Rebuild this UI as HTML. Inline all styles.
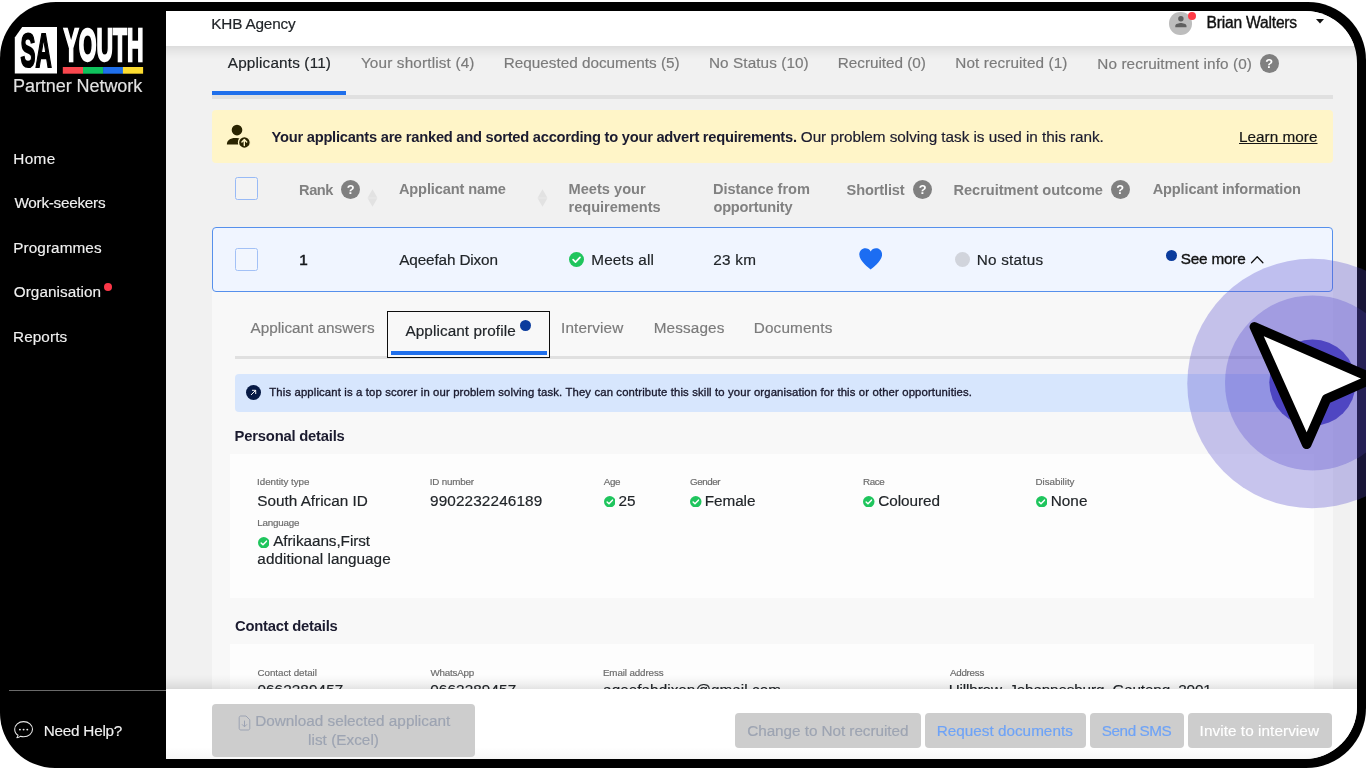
<!DOCTYPE html>
<html lang="en">
<head>
<meta charset="utf-8">
<title>SA Youth Partner Network - Applicants</title>
<style>
*{box-sizing:border-box;margin:0;padding:0}
html,body{width:1366px;height:768px;overflow:hidden;background:#fff}
body{position:relative;font-family:"Liberation Sans",Arial,sans-serif;font-size:15.3px;color:#212529}
.abs{position:absolute}
.t{position:absolute;white-space:nowrap;line-height:20px;display:block;-webkit-text-stroke:0.18px currentColor}
#side .t{-webkit-text-stroke:0.15px currentColor}
#frame{position:absolute;left:0;top:2px;width:1366px;height:765.5px;background:#000;border-radius:56px 58px 60px 55px}
#screen{position:absolute;left:166px;top:11px;width:1190.5px;height:747.5px;overflow:hidden;background:#f1f1f1;border-radius:0 51.5px 52.5px 0}
#page{position:absolute;left:-166px;top:-11px;width:1366px;height:768px;will-change:transform}
#side{position:absolute;left:0;top:0;width:166px;height:768px;will-change:transform}
.r{position:absolute}
.help{position:absolute;width:19.2px;height:19.2px;border-radius:50%;background:#808080;color:#fff;font-weight:700;font-size:12.8px;line-height:19.4px;text-align:center}
.chk{position:absolute;border-radius:50%;background:#1fc55d}
.btn{position:absolute;top:713px;height:34.5px;background:#cdcdcd;border-radius:4px}
</style>
</head>
<body>
<div id="frame"></div>

<!-- ============ SCREEN ============ -->
<div id="screen"><div id="page">
  <!-- expanded panel -->
  <div class="r" style="left:212px;top:289px;width:1120.8px;height:480px;background:#f8f8f8"></div>
  <!-- tabs line -->
  <div class="r" style="left:212px;top:95px;width:1120.8px;height:4px;background:#e0e0e0"></div>
  <div class="r" style="left:212px;top:91px;width:133.7px;height:4px;background:#1f6feb"></div>
  <!-- yellow banner -->
  <div class="r" style="left:212px;top:110px;width:1120.8px;height:52.5px;background:#fff5c8;border-radius:4px"></div>
  <svg class="abs" style="left:226px;top:124px" width="26" height="25" viewBox="0 0 26 25">
    <circle cx="11" cy="6.1" r="5.3" fill="#2a2400"/>
    <path d="M0.9 20.6 C0.6 16.2 4.4 13.9 9.2 13.9 C11.6 13.9 13.6 14.4 15 15.3 C13.2 16.6 12.2 18.5 12.5 20.6 Z" fill="#2a2400"/>
    <circle cx="18.4" cy="18.4" r="5.9" fill="#2a2400" stroke="#fff5c8" stroke-width="1.3"/>
    <path d="M18.3 21.6 V15.6 M15.9 17.9 L18.3 15.4 L20.7 17.9" fill="none" stroke="#fff5c8" stroke-width="1.4" stroke-linecap="round" stroke-linejoin="round"/>
  </svg>
  <!-- header checkbox -->
  <div class="r" style="left:235px;top:177px;width:22.5px;height:22.5px;border:1px solid #98baf6;border-radius:2.5px;background:#f3f3f3"></div>
  <!-- help icons -->
  <div class="help" style="left:341px;top:179.7px">?</div>
  <div class="help" style="left:913px;top:179.7px">?</div>
  <div class="help" style="left:1110.5px;top:179.7px">?</div>
  <div class="help" style="left:1259.5px;top:53.8px">?</div>
  <!-- sort arrows -->
  <svg class="abs" style="left:366.5px;top:188.5px" width="11" height="18" viewBox="0 0 11 18"><path d="M5.5 0.2 L10.4 8.7 H0.6 Z M5.5 17.8 L10.4 9.3 H0.6 Z" fill="#e2e2e2"/></svg>
  <svg class="abs" style="left:536.5px;top:188.5px" width="11" height="18" viewBox="0 0 11 18"><path d="M5.5 0.2 L10.4 8.7 H0.6 Z M5.5 17.8 L10.4 9.3 H0.6 Z" fill="#e2e2e2"/></svg>
  <!-- row -->
  <div class="r" style="left:212px;top:227px;width:1120.8px;height:64.5px;background:#f0f5ff;border:1px solid #5690ec;border-radius:4px"></div>
  <div class="r" style="left:235px;top:248px;width:23px;height:22.5px;border:1px solid #a3c1f6;border-radius:2.5px;background:#f2f6fe"></div>
  <!-- meets all check -->
  <svg class="abs" style="left:569.2px;top:252px" width="15" height="15" viewBox="0 0 15 15"><circle cx="7.5" cy="7.5" r="7.5" fill="#1fc55d"/><path d="M4.1 7.7 L6.5 10.1 L11 5.4" fill="none" stroke="#fff" stroke-width="1.7" stroke-linecap="round" stroke-linejoin="round"/></svg>
  <!-- heart -->
  <svg class="abs" style="left:858.7px;top:248px" width="23.4" height="22" viewBox="0 0 24 22" preserveAspectRatio="none"><path d="M12 21.6 C10.5 20.2 0.3 13.2 0.3 6.6 C0.3 2.8 3.2 0.3 6.5 0.3 C8.8 0.3 10.9 1.5 12 3.4 C13.1 1.5 15.2 0.3 17.5 0.3 C20.8 0.3 23.7 2.8 23.7 6.6 C23.7 13.2 13.5 20.2 12 21.6 Z" fill="#1c6df2"/></svg>
  <!-- no status dot -->
  <div class="r" style="left:954.75px;top:251.75px;width:15px;height:15px;border-radius:50%;background:#d1d4dc"></div>
  <!-- see more dot + chevron -->
  <div class="r" style="left:1165.75px;top:250px;width:11px;height:11px;border-radius:50%;background:#0b3c9d"></div>
  <svg class="abs" style="left:1249.5px;top:255px" width="15" height="10" viewBox="0 0 15 10"><path d="M1.5 7.8 L7.2 1.7 L12.9 7.8" fill="none" stroke="#111" stroke-width="1.25" stroke-linecap="round" stroke-linejoin="round"/></svg>

  <!-- subtabs -->
  <div class="r" style="left:235px;top:355.5px;width:1078.5px;height:3.5px;background:#e0e0e0"></div>
  <div class="r" style="left:387px;top:311px;width:163px;height:46.5px;border:1.6px solid #0d0d0d;background:#f8f8f8"></div>
  <div class="r" style="left:390.5px;top:351px;width:156.5px;height:4px;background:#1f6feb"></div>
  <div class="r" style="left:519.75px;top:320.25px;width:11px;height:11px;border-radius:50%;background:#0b3c9d"></div>
  <!-- info banner -->
  <div class="r" style="left:235px;top:374px;width:1078.5px;height:37.5px;background:#d7e6fd;border-radius:4px"></div>
  <svg class="abs" style="left:246px;top:385.3px" width="15" height="15" viewBox="0 0 15 15"><circle cx="7.5" cy="7.5" r="7.5" fill="#071a45"/><path d="M5.3 9.7 L9.5 5.5 M6.4 5.3 H9.7 V8.6" fill="none" stroke="#fff" stroke-width="0.95" stroke-linecap="round" stroke-linejoin="round"/></svg>
  <!-- cards -->
  <div class="r" style="left:230px;top:453.6px;width:1083.5px;height:144.2px;background:#fdfdfd"></div>
  <div class="r" style="left:230px;top:644px;width:1083.5px;height:140px;background:#fdfdfd"></div>
  <!-- small checks -->
  <svg class="abs" style="left:603.5px;top:495.8px" width="11.5" height="11.5" viewBox="0 0 15 15"><circle cx="7.5" cy="7.5" r="7.5" fill="#1fc55d"/><path d="M4.1 7.7 L6.5 10.1 L11 5.4" fill="none" stroke="#fff" stroke-width="1.9" stroke-linecap="round" stroke-linejoin="round"/></svg>
  <svg class="abs" style="left:690px;top:495.8px" width="11.5" height="11.5" viewBox="0 0 15 15"><circle cx="7.5" cy="7.5" r="7.5" fill="#1fc55d"/><path d="M4.1 7.7 L6.5 10.1 L11 5.4" fill="none" stroke="#fff" stroke-width="1.9" stroke-linecap="round" stroke-linejoin="round"/></svg>
  <svg class="abs" style="left:863.25px;top:495.8px" width="11.5" height="11.5" viewBox="0 0 15 15"><circle cx="7.5" cy="7.5" r="7.5" fill="#1fc55d"/><path d="M4.1 7.7 L6.5 10.1 L11 5.4" fill="none" stroke="#fff" stroke-width="1.9" stroke-linecap="round" stroke-linejoin="round"/></svg>
  <svg class="abs" style="left:1035.75px;top:495.8px" width="11.5" height="11.5" viewBox="0 0 15 15"><circle cx="7.5" cy="7.5" r="7.5" fill="#1fc55d"/><path d="M4.1 7.7 L6.5 10.1 L11 5.4" fill="none" stroke="#fff" stroke-width="1.9" stroke-linecap="round" stroke-linejoin="round"/></svg>
  <svg class="abs" style="left:257.5px;top:536.5px" width="11.5" height="11.5" viewBox="0 0 15 15"><circle cx="7.5" cy="7.5" r="7.5" fill="#1fc55d"/><path d="M4.1 7.7 L6.5 10.1 L11 5.4" fill="none" stroke="#fff" stroke-width="1.9" stroke-linecap="round" stroke-linejoin="round"/></svg>

<span class="t" id="t9" style="left:227.77px;top:53.00px;font-size:15.3px;color:#212529;letter-spacing:0.162px;">Applicants (11)</span>
<span class="t" id="t10" style="left:360.91px;top:53.00px;font-size:15.3px;color:#7b7b7b;letter-spacing:0.160px;">Your shortlist (4)</span>
<span class="t" id="t11" style="left:503.74px;top:53.00px;font-size:15.3px;color:#7b7b7b;letter-spacing:-0.003px;">Requested documents (5)</span>
<span class="t" id="t12" style="left:708.99px;top:53.00px;font-size:15.3px;color:#7b7b7b;letter-spacing:0.083px;">No Status (10)</span>
<span class="t" id="t13" style="left:837.74px;top:53.00px;font-size:15.3px;color:#7b7b7b;letter-spacing:-0.018px;">Recruited (0)</span>
<span class="t" id="t14" style="left:955.24px;top:53.00px;font-size:15.3px;color:#7b7b7b;letter-spacing:0.106px;">Not recruited (1)</span>
<span class="t" id="t15" style="left:1097.24px;top:54.00px;font-size:15.3px;color:#7b7b7b;letter-spacing:0.115px;">No recruitment info (0)</span>
<span class="t" id="t16" style="left:271.55px;top:127.00px;font-size:14.7px;color:#1b1b2f;font-weight:700;-webkit-text-stroke:0;letter-spacing:-0.249px;">Your applicants are ranked and sorted according to your advert requirements.</span>
<span class="t" id="t17" style="left:800.78px;top:127.00px;font-size:15.3px;color:#1b1b2f;letter-spacing:-0.028px;">Our problem solving task is used in this rank.</span>
<span class="t" id="t18" style="left:1239.04px;top:127.00px;font-size:15.3px;color:#151515;letter-spacing:0.022px;text-decoration:underline;text-underline-offset:1px;text-decoration-thickness:1px;">Learn more</span>
<span class="t" id="t19" style="left:299.02px;top:180.00px;font-size:14.6px;color:#818181;font-weight:700;-webkit-text-stroke:0;letter-spacing:-0.408px;">Rank</span>
<span class="t" id="t20" style="left:398.89px;top:179.00px;font-size:14.6px;color:#818181;font-weight:700;-webkit-text-stroke:0;letter-spacing:-0.120px;">Applicant name</span>
<span class="t" id="t21" style="left:568.52px;top:179.00px;font-size:14.6px;color:#818181;font-weight:700;-webkit-text-stroke:0;letter-spacing:0.017px;">Meets your</span>
<span class="t" id="t22" style="left:568.54px;top:197.00px;font-size:14.6px;color:#818181;font-weight:700;-webkit-text-stroke:0;letter-spacing:-0.037px;">requirements</span>
<span class="t" id="t23" style="left:713.02px;top:179.00px;font-size:14.6px;color:#818181;font-weight:700;-webkit-text-stroke:0;letter-spacing:-0.037px;">Distance from</span>
<span class="t" id="t24" style="left:713.43px;top:197.00px;font-size:14.6px;color:#818181;font-weight:700;-webkit-text-stroke:0;letter-spacing:-0.191px;">opportunity</span>
<span class="t" id="t25" style="left:846.58px;top:180.00px;font-size:14.6px;color:#818181;font-weight:700;-webkit-text-stroke:0;letter-spacing:-0.136px;">Shortlist</span>
<span class="t" id="t26" style="left:953.52px;top:180.00px;font-size:14.6px;color:#818181;font-weight:700;-webkit-text-stroke:0;letter-spacing:-0.030px;">Recruitment outcome</span>
<span class="t" id="t27" style="left:1152.64px;top:179.00px;font-size:14.6px;color:#818181;font-weight:700;-webkit-text-stroke:0;letter-spacing:-0.127px;">Applicant information</span>
<span class="t" id="t28" style="left:299.33px;top:250.00px;font-size:15.3px;color:#15181c;-webkit-text-stroke:0.55px currentColor;">1</span>
<span class="t" id="t29" style="left:399.22px;top:250.00px;font-size:15.3px;color:#212529;letter-spacing:-0.132px;">Aqeefah Dixon</span>
<span class="t" id="t30" style="left:591.24px;top:250.00px;font-size:15.3px;color:#212529;letter-spacing:0.195px;">Meets all</span>
<span class="t" id="t31" style="left:713.23px;top:250.00px;font-size:15.3px;color:#212529;letter-spacing:0.280px;">23 km</span>
<span class="t" id="t32" style="left:976.74px;top:250.00px;font-size:15.3px;color:#212529;letter-spacing:0.210px;">No status</span>
<span class="t" id="t33" style="left:1180.81px;top:249.00px;font-size:15.3px;color:#111;letter-spacing:-0.208px;-webkit-text-stroke:0.35px currentColor;">See more</span>
<span class="t" id="t34" style="left:250.47px;top:318.00px;font-size:15.3px;color:#7b7b7b;letter-spacing:-0.004px;">Applicant answers</span>
<span class="t" id="t35" style="left:405.47px;top:321.00px;font-size:15.3px;color:#212529;letter-spacing:0.085px;">Applicant profile</span>
<span class="t" id="t36" style="left:561.09px;top:318.00px;font-size:15.3px;color:#7b7b7b;letter-spacing:0.113px;">Interview</span>
<span class="t" id="t37" style="left:653.74px;top:318.00px;font-size:15.3px;color:#7b7b7b;letter-spacing:0.120px;">Messages</span>
<span class="t" id="t38" style="left:753.74px;top:318.00px;font-size:15.3px;color:#7b7b7b;letter-spacing:0.148px;">Documents</span>
<span class="t" id="t39" style="left:269.25px;top:382.00px;font-size:11.3px;color:#1b1b2f;letter-spacing:0.147px;-webkit-text-stroke:0.35px currentColor;">This applicant is a top scorer in our problem solving task. They can contribute this skill to your organisation for this or other opportunities.</span>
<span class="t" id="t40" style="left:234.61px;top:426.00px;font-size:14.8px;color:#1b1b2f;font-weight:700;-webkit-text-stroke:0;letter-spacing:-0.220px;">Personal details</span>
<span class="t" id="t41" style="left:234.99px;top:616.00px;font-size:14.8px;color:#1b1b2f;font-weight:700;-webkit-text-stroke:0;letter-spacing:-0.233px;">Contact details</span>
<span class="t" id="t42" style="left:257.10px;top:472.00px;font-size:9.8px;color:#6c6c6c;letter-spacing:-0.041px;">Identity type</span>
<span class="t" id="t43" style="left:429.85px;top:472.00px;font-size:9.8px;color:#6c6c6c;letter-spacing:-0.210px;">ID number</span>
<span class="t" id="t44" style="left:603.73px;top:472.00px;font-size:9.8px;color:#6c6c6c;letter-spacing:-0.366px;">Age</span>
<span class="t" id="t45" style="left:690.01px;top:472.00px;font-size:9.8px;color:#6c6c6c;letter-spacing:-0.456px;">Gender</span>
<span class="t" id="t46" style="left:862.95px;top:472.00px;font-size:9.8px;color:#6c6c6c;letter-spacing:-0.379px;">Race</span>
<span class="t" id="t47" style="left:1035.45px;top:472.00px;font-size:9.8px;color:#6c6c6c;letter-spacing:-0.014px;">Disability</span>
<span class="t" id="t48" style="left:257.20px;top:513.00px;font-size:9.8px;color:#6c6c6c;letter-spacing:-0.193px;">Language</span>
<span class="t" id="t49" style="left:257.31px;top:491.00px;font-size:15.3px;color:#212529;letter-spacing:-0.008px;">South African ID</span>
<span class="t" id="t50" style="left:430.03px;top:491.00px;font-size:15.3px;color:#212529;letter-spacing:0.132px;">9902232246189</span>
<span class="t" id="t51" style="left:618.48px;top:491.00px;font-size:15.3px;color:#212529;">25</span>
<span class="t" id="t52" style="left:704.74px;top:491.00px;font-size:15.3px;color:#212529;letter-spacing:-0.066px;">Female</span>
<span class="t" id="t53" style="left:878.22px;top:491.00px;font-size:15.3px;color:#212529;letter-spacing:-0.045px;">Coloured</span>
<span class="t" id="t54" style="left:1050.74px;top:491.00px;font-size:15.3px;color:#212529;letter-spacing:0.036px;">None</span>
<span class="t" id="t55" style="left:273.22px;top:531.00px;font-size:15.3px;color:#212529;letter-spacing:-0.061px;">Afrikaans,First</span>
<span class="t" id="t56" style="left:257.35px;top:549.00px;font-size:15.3px;color:#212529;letter-spacing:0.035px;">additional language</span>
<span class="t" id="t57" style="left:257.50px;top:663.00px;font-size:9.8px;color:#6c6c6c;letter-spacing:-0.039px;">Contact detail</span>
<span class="t" id="t58" style="left:430.46px;top:663.00px;font-size:9.8px;color:#6c6c6c;letter-spacing:-0.214px;">WhatsApp</span>
<span class="t" id="t59" style="left:602.95px;top:663.00px;font-size:9.8px;color:#6c6c6c;letter-spacing:-0.118px;">Email address</span>
<span class="t" id="t60" style="left:949.98px;top:663.00px;font-size:9.8px;color:#6c6c6c;letter-spacing:-0.263px;">Address</span>
<span class="t" id="t61" style="left:257.40px;top:680.00px;font-size:15.3px;color:#212529;letter-spacing:0.088px;">0662289457</span>
<span class="t" id="t62" style="left:430.15px;top:680.00px;font-size:15.3px;color:#212529;letter-spacing:0.115px;">0662289457</span>
<span class="t" id="t63" style="left:603.10px;top:680.00px;font-size:15.3px;color:#212529;letter-spacing:0.038px;">aqeefahdixon@gmail.com</span>
<span class="t" id="t64" style="left:948.74px;top:680.00px;font-size:15.3px;color:#212529;letter-spacing:-0.159px;">Hillbrow, Johannesburg, Gauteng, 2001</span>

  <!-- header bar -->
  <div class="r" style="left:166px;top:46px;width:1200px;height:14px;background:linear-gradient(to bottom,rgba(0,0,0,.085),rgba(0,0,0,.045) 35%,rgba(0,0,0,.015) 70%,rgba(0,0,0,0))"></div>
  <div class="r" style="left:166px;top:0;width:1200px;height:46px;background:#fff"></div>
  <!-- avatar -->
  <div class="r" style="left:1169px;top:12.3px;width:22.5px;height:22.5px;border-radius:50%;background:#bdbdbd"></div>
  <svg class="abs" style="left:1170.5px;top:12.1px" width="19.8" height="19.8" viewBox="0 0 24 24"><path d="M12 11.6a3.3 3.3 0 1 0 0-6.6 3.3 3.3 0 0 0 0 6.6zm0 1.7c-2.3 0-6.8 1.1-6.8 3.4V18.4h13.6v-1.7c0-2.3-4.5-3.4-6.8-3.4z" fill="#5f5f5f"/></svg>
  <div class="r" style="left:1188px;top:12.3px;width:7.8px;height:7.8px;border-radius:50%;background:#ff3b47"></div>
<span class="t" id="t7" style="left:211.24px;top:14.00px;font-size:15.3px;color:#212529;letter-spacing:-0.156px;">KHB Agency</span>
<span class="t" id="t8" style="left:1206.52px;top:13.00px;font-size:15.6px;color:#111;letter-spacing:-0.198px;-webkit-text-stroke:0.35px currentColor;">Brian Walters</span>
  <svg class="abs" style="left:1316px;top:19.3px" width="8" height="5" viewBox="0 0 8 5"><path d="M0 0 H8 L4 4.4 Z" fill="#111"/></svg>

  <!-- footer bar -->
  <div class="r" style="left:166px;top:674px;width:1200px;height:15.3px;background:linear-gradient(to top,rgba(0,0,0,.1),rgba(0,0,0,.05) 35%,rgba(0,0,0,.015) 70%,rgba(0,0,0,0))"></div>
  <div class="r" style="left:166px;top:689.3px;width:1200px;height:80px;background:#fff"></div>
  <div class="r" style="left:166px;top:747px;width:1200px;height:12px;background:linear-gradient(to bottom,#fff,#f7f7f7)"></div>
  <div class="btn" style="left:212px;top:703.75px;width:262.5px;height:53px"></div>
  <div class="btn" style="left:735px;width:185.5px"></div>
  <div class="btn" style="left:925px;width:160.75px"></div>
  <div class="btn" style="left:1090px;width:94px"></div>
  <div class="btn" style="left:1188px;width:144px"></div>
  <svg class="abs" style="left:237.5px;top:714.5px" width="13" height="16" viewBox="0 0 13 16"><path d="M1.2 2.6 C1.2 1.6 1.9 1 2.8 1 H8 L11.8 4.8 V13.4 C11.8 14.3 11.1 15 10.2 15 H2.8 C1.9 15 1.2 14.3 1.2 13.4 Z" fill="none" stroke="#9ca3b3" stroke-width="1"/><path d="M6.5 6 V11.6 M4.3 9.6 L6.5 11.8 L8.7 9.6" fill="none" stroke="#9ca3b3" stroke-width="1" stroke-linecap="round" stroke-linejoin="round"/></svg>
<span class="t" id="t65" style="left:255.14px;top:711.00px;font-size:15.3px;color:#9da4b2;letter-spacing:0.012px;">Download selected applicant</span>
<span class="t" id="t66" style="left:308.07px;top:730.00px;font-size:15.3px;color:#9da4b2;letter-spacing:0.030px;">list (Excel)</span>
<span class="t" id="t67" style="left:747.22px;top:721.00px;font-size:15.3px;color:#9da4b2;letter-spacing:-0.053px;">Change to Not recruited</span>
<span class="t" id="t68" style="left:936.74px;top:721.00px;font-size:15.3px;color:#6ea3f7;letter-spacing:-0.000px;">Request documents</span>
<span class="t" id="t69" style="left:1101.81px;top:721.00px;font-size:15.3px;color:#6ea3f7;letter-spacing:-0.461px;">Send SMS</span>
<span class="t" id="t70" style="left:1199.59px;top:721.00px;font-size:15.3px;color:#fff;letter-spacing:0.066px;">Invite to interview</span>
</div></div>

<!-- ============ SIDEBAR ============ -->
<div id="side">
  <!-- logo -->
  <svg class="abs" style="left:0;top:0" width="166" height="110" viewBox="0 0 166 110">
    <path d="M22.2 26.9 H57 V73.6 H14.8 V37.5 Z" fill="#fff"/>
    <rect x="62.8" y="67" width="20.3" height="6.7" fill="#f9474e"/>
    <rect x="83" y="67" width="20.2" height="6.7" fill="#0fc25c"/>
    <rect x="103.1" y="67" width="19.9" height="6.7" fill="#1f6feb"/>
    <rect x="122.9" y="67" width="20.2" height="6.7" fill="#fcdc30"/>
    <text x="0" y="0" font-family="Liberation Sans, Arial, sans-serif" font-weight="700" font-size="30" fill="#000" transform="translate(20.5 67.1) scale(0.75 1.62)" stroke="#000" stroke-width="1.7" vector-effect="non-scaling-stroke" paint-order="stroke">SA</text>
    <text x="0" y="0" font-family="Liberation Sans, Arial, sans-serif" font-weight="700" font-size="30" fill="#fff" transform="translate(63.5 60.8) scale(0.762 1.545)" stroke="#fff" stroke-width="1.8" vector-effect="non-scaling-stroke" paint-order="stroke">YOUTH</text>
  </svg>
<span class="t" id="t0" style="left:13.02px;top:76.00px;font-size:18px;color:#e2e2e2;letter-spacing:-0.057px;">Partner Network</span>
<span class="t" id="t1" style="left:13.24px;top:149.00px;font-size:15.3px;color:#f0f0f0;letter-spacing:0.374px;">Home</span>
<span class="t" id="t2" style="left:14.43px;top:193.00px;font-size:15.3px;color:#f0f0f0;letter-spacing:-0.269px;">Work-seekers</span>
<span class="t" id="t3" style="left:13.24px;top:238.00px;font-size:15.3px;color:#f0f0f0;letter-spacing:0.083px;">Programmes</span>
<span class="t" id="t4" style="left:13.78px;top:282.00px;font-size:15.3px;color:#f0f0f0;letter-spacing:0.044px;">Organisation</span>
<span class="t" id="t5" style="left:13.04px;top:327.00px;font-size:15.3px;color:#f0f0f0;letter-spacing:0.091px;">Reports</span>
<span class="t" id="t6" style="left:43.74px;top:721.00px;font-size:15.3px;color:#f0f0f0;letter-spacing:-0.242px;">Need Help?</span>
  <div class="r" style="left:103.7px;top:282.7px;width:8.2px;height:8.2px;border-radius:50%;background:#fb3748"></div>
  <div class="r" style="left:9px;top:690px;width:157px;height:1px;background:#6a6a6a"></div>
  <svg class="abs" style="left:13px;top:720px" width="22" height="20" viewBox="0 0 22 20"><path d="M10.6 1.6 C15.6 1.6 19.5 4.9 19.5 9.2 C19.5 13.5 15.6 16.8 10.6 16.8 C9.4 16.8 8.3 16.6 7.3 16.3 C6.4 17.1 5.3 17.6 3.9 17.7 C4.6 17 5 16.2 5 15.3 C3 13.9 1.7 11.7 1.7 9.2 C1.7 4.9 5.6 1.6 10.6 1.6 Z" fill="none" stroke="#e8e8e8" stroke-width="1.05" stroke-linejoin="round"/><circle cx="6.9" cy="9.6" r="0.95" fill="#e8e8e8"/><circle cx="10.6" cy="9.6" r="0.95" fill="#e8e8e8"/><circle cx="14.3" cy="9.6" r="0.95" fill="#e8e8e8"/></svg>
</div>

<!-- ============ CLICK OVERLAY ============ -->
<svg class="abs" style="left:1166px;top:240px" width="190.5" height="290" viewBox="1166 240 190.5 290">
  <circle cx="1312" cy="383.5" r="124.7" fill="rgb(88,78,205)" fill-opacity="0.32"/>
  <circle cx="1312.5" cy="382.9" r="87.5" fill="rgb(88,78,205)" fill-opacity="0.32"/>
  <circle cx="1312.5" cy="382.6" r="43.2" fill="rgb(70,60,190)" fill-opacity="0.9"/>
</svg>
<svg class="abs" style="left:1356.5px;top:240px" width="9.5" height="290" viewBox="1356.5 240 9.5 290">
  <circle cx="1312" cy="383.5" r="124.7" fill="rgb(88,78,205)" fill-opacity="0.27"/>
  <circle cx="1312.5" cy="382.9" r="87.5" fill="rgb(88,78,205)" fill-opacity="0.2"/>
</svg>
<svg class="abs" style="left:1166px;top:240px" width="200" height="290" viewBox="1166 240 200 290">
  <path d="M1254.35 326.85 L1372.7 378.4 L1326.5 399 L1306.7 444.25 Z" fill="#fff" stroke="#000" stroke-width="9.6" stroke-linejoin="round"/>
</svg>
</body>
</html>
